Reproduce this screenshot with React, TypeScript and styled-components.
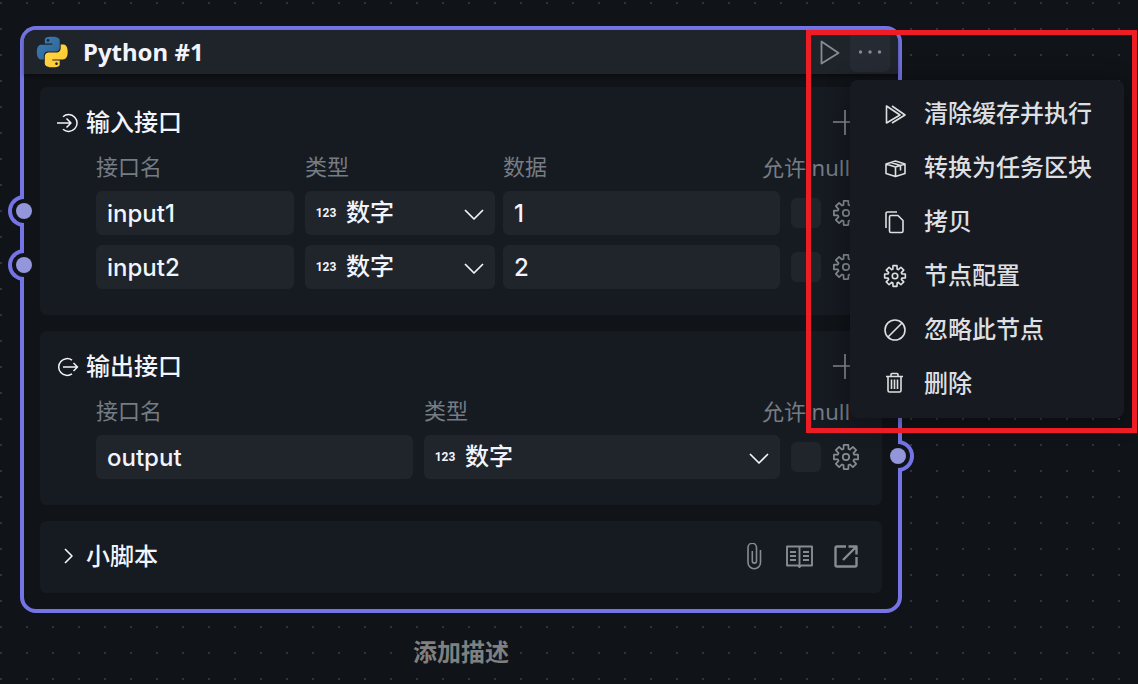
import React from "react";
import styled, { createGlobalStyle } from "styled-components";

const colors = {
  page: "#101317",
  panel: "#161a21",
  field: "#20242b",
  accent: "#7574e6",
  port: "#9396da",
  text: "#f1f4fd",
  muted: "#757c84",
  icon: "#858c94",
  menuText: "#dedfe0",
};

const GlobalStyle = createGlobalStyle`
  *, *::before, *::after { box-sizing: border-box; }
  body {
    margin: 0;
    background-color: ${colors.page};
    color: ${colors.text};
    font-family: Inter, "Noto Sans CJK SC", sans-serif;
    font-size: 24px;
    line-height: 32px;
  }
  button, input, select { font: inherit; color: inherit; }
  svg { display: block; flex: none; }
`;

const Canvas = styled.main`
  min-height: 100vh;
  padding: 26px 236px 16px 20px;
  overflow: hidden;
  background-image: radial-gradient(circle, #30343a 1px, transparent 1px);
  background-size: 26px 26px;
  background-position: -12px -10px;
`;

const Node = styled.article`
  border: 4px solid ${colors.accent};
  border-radius: 16px;
  background: ${colors.page};
`;

const NodeHeader = styled.header`
  display: flex;
  align-items: center;
  height: 44px;
  padding: 0 8px 0 12px;
  border-radius: 12px 12px 0 0;
  background: #1f232a;
  box-shadow: 0 2px 4px rgba(0, 0, 0, 0.4);
`;

const NodeTitle = styled.h1`
  flex: 1;
  margin: 0 0 0 15px;
  font-family: "Noto Sans", sans-serif;
  font-size: 24px;
  font-weight: 700;
`;

const IconButton = styled.button<{ $size: number; $filled?: boolean }>`
  display: flex;
  align-items: center;
  justify-content: center;
  width: ${(p) => p.$size}px;
  height: ${(p) => p.$size}px;
  padding: 0;
  border: 0;
  border-radius: 6px;
  background: ${(p) => (p.$filled ? "#262b33" : "transparent")};
  color: ${colors.icon};
  cursor: pointer;
`;

const MenuAnchor = styled.div`
  position: relative;
  z-index: 2;
`;

const Menu = styled.div`
  position: absolute;
  top: 48px;
  left: 0;
  width: 274px;
  padding: 7px 0;
  border-radius: 8px;
  background: #171b21;
  box-shadow: 0 4px 24px rgba(0, 0, 0, 0.4);
`;

const MenuItem = styled.button`
  display: flex;
  align-items: center;
  gap: 16px;
  width: 100%;
  height: 54px;
  padding: 0 32px;
  border: 0;
  background: transparent;
  color: ${colors.menuText};
  font-weight: 500;
  white-space: nowrap;
  cursor: pointer;
`;

const Highlight = styled.div`
  position: absolute;
  top: -2px;
  left: -44px;
  width: 331px;
  height: 403px;
  border: 5px solid #ee1c24;
  pointer-events: none;
`;

const NodeBody = styled.div`
  display: flex;
  flex-direction: column;
  gap: 16px;
  padding: 13px 16px 16px;
`;

const Panel = styled.section`
  padding: 16px 22px 26px 16px;
  border-radius: 6px;
  background: ${colors.panel};
`;

const ScriptPanel = styled(Panel)`
  padding: 16px 22px 16px 16px;
`;

const PanelHead = styled.div`
  display: flex;
  align-items: center;
  justify-content: space-between;
  height: 40px;
`;

const PanelTitle = styled.h2`
  display: flex;
  align-items: center;
  gap: 6px;
  margin: 0;
  font-size: 24px;
  font-weight: 500;
`;

const Tools = styled.div`
  display: flex;
  gap: 16px;
`;

const Rows = styled.div`
  display: flex;
  flex-direction: column;
  gap: 10px;
  padding-left: 40px;
`;

const Row = styled.div<{ $wide?: boolean }>`
  position: relative;
  display: grid;
  grid-template-columns:
    ${(p) => (p.$wide ? "minmax(0, 317fr) minmax(0, 356fr)" : "minmax(0, 198fr) minmax(0, 475fr)")}
    30px 28px;
  column-gap: 11px;
  align-items: center;
`;

const LabelRow = styled(Row)`
  height: 38px;
  padding-top: 12px;
  padding-bottom: 2px;
  color: ${colors.muted};
  font-size: 22px;
  line-height: 24px;
`;

const NullLabel = styled.span`
  display: flex;
  justify-content: center;
  font-family: "Noto Sans", "Noto Sans CJK SC", sans-serif;
  white-space: nowrap;
`;

const Pair = styled.div`
  display: grid;
  grid-template-columns: minmax(0, 190fr) minmax(0, 277fr);
  column-gap: 8px;
`;

const TextField = styled.input`
  width: 100%;
  height: 44px;
  padding: 0 11px;
  border: 0;
  border-radius: 6px;
  background: ${colors.field};
  font-weight: 500;
  outline: none;
`;

const SelectBox = styled.label`
  display: flex;
  align-items: center;
  height: 44px;
  padding: 0 10px 0 9px;
  border-radius: 6px;
  background: ${colors.field};
`;

const NumberMark = styled.span`
  width: 24px;
  font-family: Roboto, sans-serif;
  font-size: 12px;
  font-weight: 700;
  text-align: center;
`;

const Select = styled.select`
  flex: 1;
  min-width: 0;
  height: 44px;
  padding: 0 0 0 8px;
  border: 0;
  background: transparent;
  appearance: none;
  font-weight: 500;
  outline: none;
`;

const Check = styled.input`
  width: 30px;
  height: 30px;
  margin: 0;
  border-radius: 6px;
  background: ${colors.field};
  appearance: none;
`;

const Port = styled.span<{ $side: "left" | "right" }>`
  position: absolute;
  top: ${(p) => (p.$side === "left" ? 4 : 5)}px;
  ${(p) => (p.$side === "left" ? "left: -88px;" : "right: -54px;")}
  width: 16px;
  height: 32px;
  border: 4px solid ${colors.accent};
  border-${(p) => (p.$side === "left" ? "right" : "left")}: 0;
  border-radius: ${(p) => (p.$side === "left" ? "16px 0 0 16px" : "0 16px 16px 0")};
  background: ${colors.page};

  &::after {
    content: "";
    position: absolute;
    top: 4px;
    ${(p) => (p.$side === "left" ? "right" : "left")}: -8px;
    width: 16px;
    height: 16px;
    border-radius: 50%;
    background: ${colors.port};
  }
`;

const Caption = styled.p`
  margin: 24px 0 0;
  color: #7f8081;
  font-weight: 700;
  text-align: center;
`;

type IconProps = { size: number; box: string; width?: number; children: React.ReactNode };

const Stroke = ({ size, box, width = 1.6, children }: IconProps) => (
  <svg
    width={size}
    height={size}
    viewBox={box}
    fill="none"
    stroke="currentColor"
    strokeWidth={width}
    strokeLinejoin="round"
    aria-hidden="true"
  >
    {children}
  </svg>
);

const PythonLogo = () => (
  <svg width="32" height="32" viewBox="-0.7 -0.5 25 25" aria-hidden="true">
    <defs>
      <linearGradient id="pyBlue" x1="0" y1="0" x2="1" y2="1">
        <stop offset="0" stopColor="#3b7db4" />
        <stop offset="1" stopColor="#2f6492" />
      </linearGradient>
      <linearGradient id="pyYellow" x1="0" y1="0" x2="1" y2="1">
        <stop offset="0" stopColor="#ffd845" />
        <stop offset="1" stopColor="#ffc832" />
      </linearGradient>
    </defs>
    <path
      fill="url(#pyBlue)"
      d="M14.25.18l.9.2.73.26.59.3.45.32.34.34.25.34.16.33.1.3.04.26.02.2-.01.13V8.5l-.05.63-.13.55-.21.46-.26.38-.3.31-.33.25-.35.19-.35.14-.33.1-.3.07-.26.04-.21.02H8.77l-.69.05-.59.14-.5.22-.41.27-.33.32-.27.35-.2.36-.15.37-.1.35-.07.32-.04.27-.02.21v3.06H3.17l-.21-.03-.28-.07-.32-.12-.35-.18-.36-.26-.36-.36-.35-.46-.32-.59-.28-.73-.21-.88-.14-1.05-.05-1.23.06-1.22.16-1.04.24-.87.32-.71.36-.57.4-.44.42-.33.42-.24.4-.16.36-.1.32-.05.24-.01h.16l.06.01h8.16v-.83H6.18l-.01-2.75-.02-.37.05-.34.11-.31.17-.28.25-.26.31-.23.38-.2.44-.18.51-.15.58-.12.64-.1.71-.06.77-.04.84-.02 1.27.05zm-6.3 1.98l-.23.33-.08.41.08.41.23.34.33.22.41.09.41-.09.33-.22.23-.34.08-.41-.08-.41-.23-.33-.33-.22-.41-.09-.41.09z"
    />
    <path
      fill="url(#pyYellow)"
      d="M21.04 6.11l.28.06.32.12.35.18.36.27.36.35.35.47.32.59.28.73.21.88.14 1.04.05 1.23-.06 1.23-.16 1.04-.24.86-.32.71-.36.57-.4.45-.42.33-.42.24-.4.16-.36.09-.32.05-.24.02-.16-.01h-8.22v.82h5.84l.01 2.76.02.36-.05.34-.11.31-.17.29-.25.25-.31.24-.38.2-.44.17-.51.15-.58.13-.64.09-.71.07-.77.04-.84.01-1.27-.04-1.07-.14-.9-.2-.73-.25-.59-.3-.45-.33-.34-.34-.25-.34-.16-.33-.1-.3-.04-.25-.02-.2.01-.13v-5.34l.05-.64.13-.54.21-.46.26-.38.3-.32.33-.24.35-.2.35-.14.33-.1.3-.06.26-.04.21-.02.13-.01h5.84l.69-.05.59-.14.5-.21.41-.28.33-.32.27-.35.2-.36.15-.36.1-.35.07-.32.04-.28.02-.21V6.07h2.09l.14.01zm-6.47 14.25l-.23.33-.08.41.08.41.23.33.33.23.41.08.41-.08.33-.23.23-.33.08-.41-.08-.41-.23-.33-.33-.23-.41-.08-.41.08z"
    />
  </svg>
);

const gearOutline = (() => {
  const points: string[] = [];
  const add = (radius: number, degrees: number) => {
    const a = (degrees * Math.PI) / 180;
    points.push(`${(radius * Math.cos(a)).toFixed(2)} ${(radius * Math.sin(a)).toFixed(2)}`);
  };
  for (let tooth = 0; tooth < 8; tooth++) {
    const mid = tooth * 45;
    add(8.4, mid - 17);
    add(12.3, mid - 11);
    add(12.3, mid + 11);
    add(8.4, mid + 17);
  }
  return `M${points.join("L")}Z`;
})();

const Gear = ({ size }: { size: number }) => (
  <Stroke size={size} box="-14 -14 28 28" width={size < 28 ? 1.9 : 1.7}>
    <path d={gearOutline} />
    <circle r="3.2" />
  </Stroke>
);

const InIcon = () => (
  <Stroke size={24} box="0 0 24 24" width={1.5}>
    <path d="M1 12h14M10.5 7.5L15 12l-4.5 4.5M7 5.8a8.4 8.4 0 1 1 0 12.4" />
  </Stroke>
);

const OutIcon = () => (
  <Stroke size={24} box="0 0 24 24" width={1.5}>
    <path d="M7 12h14.5M17.5 8l4 4-4 4M16 5.2a8.4 8.4 0 1 0 0 13.6" />
  </Stroke>
);

const PlusIcon = () => (
  <Stroke size={26} box="0 0 26 26" width={1.7}>
    <path d="M0 12h25M12 0v25" />
  </Stroke>
);

const ChevronDown = () => (
  <Stroke size={22} box="0 0 22 22" width={1.7}>
    <path d="M2 8l9 9 9-9" />
  </Stroke>
);

const menuItems: { label: string; icon: React.ReactNode }[] = [
  {
    label: "清除缓存并执行",
    icon: (
      <Stroke size={26} box="0 0 26 26">
        <path d="M4.5 5v17L18 14zM10 5l13 9-13 8" />
      </Stroke>
    ),
  },
  {
    label: "转换为任务区块",
    icon: (
      <Stroke size={26} box="0 0 26 26">
        <path d="M4 9l9.5-3L23 9v9.5L13.5 21.5 4 18.5zM4 9l9.5 3L23 9M13.5 12v9.5M9 7.5l9.5 3v5" />
      </Stroke>
    ),
  },
  {
    label: "拷贝",
    icon: (
      <Stroke size={26} box="0 0 26 26">
        <path d="M4 19V4.5a1.5 1.5 0 0 1 1.5-1.5H15M7.5 8a1.5 1.5 0 0 1 1.5-1.5h7l5 5v10.5a1.5 1.5 0 0 1-1.5 1.5H9a1.5 1.5 0 0 1-1.5-1.5z" />
      </Stroke>
    ),
  },
  { label: "节点配置", icon: <Gear size={24} /> },
  {
    label: "忽略此节点",
    icon: (
      <Stroke size={26} box="0 0 26 26">
        <circle cx="13" cy="13" r="10" />
        <path d="M6 20L20 6" />
      </Stroke>
    ),
  },
  {
    label: "删除",
    icon: (
      <Stroke size={26} box="0 0 26 26">
        <path d="M4 5.5h17M9 5.5V3.5a1 1 0 0 1 1-1h5a1 1 0 0 1 1 1v2M6 5.5v14a1.5 1.5 0 0 0 1.5 1.5h10a1.5 1.5 0 0 0 1.5-1.5v-14M9.5 8.5v9.5M12.5 8.5v9.5M15.5 8.5v9.5" />
      </Stroke>
    ),
  },
];

const IconSlot = styled.span`
  display: flex;
  justify-content: center;
  width: 26px;
`;

const TypeSelect = ({ label }: { label: string }) => (
  <SelectBox>
    <NumberMark aria-hidden="true">123</NumberMark>
    <Select aria-label={label} defaultValue="number">
      <option value="number">数字</option>
    </Select>
    <ChevronDown />
  </SelectBox>
);

const RowEnd = ({ name }: { name: string }) => (
  <>
    <Check type="checkbox" aria-label={`${name} null`} />
    <IconButton $size={28} type="button" aria-label={`${name} 配置`}>
      <Gear size={28} />
    </IconButton>
  </>
);

const inputs = [
  { name: "input1", value: "1" },
  { name: "input2", value: "2" },
];

export default function App() {
  return (
    <>
      <GlobalStyle />
      <Canvas>
        <Node>
          <NodeHeader>
            <PythonLogo />
            <NodeTitle>Python #1</NodeTitle>
            <IconButton $size={40} type="button" aria-label="执行">
              <Stroke size={26} box="0 0 26 26" width={1.8}>
                <path d="M4.5 2.5v22L21.5 14z" />
              </Stroke>
            </IconButton>
            <MenuAnchor>
              <IconButton $size={40} $filled type="button" aria-label="更多">
                <svg width="26" height="26" viewBox="0 0 26 26" fill="currentColor" aria-hidden="true">
                  <circle cx="3.5" cy="13" r="1.7" />
                  <circle cx="13" cy="13" r="1.7" />
                  <circle cx="22.5" cy="13" r="1.7" />
                </svg>
              </IconButton>
              <Menu role="menu">
                {menuItems.map((item) => (
                  <MenuItem key={item.label} type="button" role="menuitem">
                    <IconSlot>{item.icon}</IconSlot>
                    {item.label}
                  </MenuItem>
                ))}
              </Menu>
              <Highlight />
            </MenuAnchor>
          </NodeHeader>

          <NodeBody>
            <Panel>
              <PanelHead>
                <PanelTitle>
                  <InIcon />
                  输入接口
                </PanelTitle>
                <IconButton $size={28} type="button" aria-label="添加输入">
                  <PlusIcon />
                </IconButton>
              </PanelHead>
              <Rows>
                <LabelRow>
                  <span>接口名</span>
                  <Pair>
                    <span>类型</span>
                    <span>数据</span>
                  </Pair>
                  <NullLabel>允许 null</NullLabel>
                </LabelRow>
                {inputs.map(({ name, value }) => (
                  <Row key={name}>
                    <Port $side="left" />
                    <TextField aria-label="接口名" defaultValue={name} />
                    <Pair>
                      <TypeSelect label={`${name} 类型`} />
                      <TextField aria-label={`${name} 数据`} defaultValue={value} />
                    </Pair>
                    <RowEnd name={name} />
                  </Row>
                ))}
              </Rows>
            </Panel>

            <Panel>
              <PanelHead>
                <PanelTitle>
                  <OutIcon />
                  输出接口
                </PanelTitle>
                <IconButton $size={28} type="button" aria-label="添加输出">
                  <PlusIcon />
                </IconButton>
              </PanelHead>
              <Rows>
                <LabelRow $wide>
                  <span>接口名</span>
                  <span>类型</span>
                  <NullLabel>允许 null</NullLabel>
                </LabelRow>
                <Row $wide>
                  <Port $side="right" />
                  <TextField aria-label="接口名" defaultValue="output" />
                  <TypeSelect label="output 类型" />
                  <RowEnd name="output" />
                </Row>
              </Rows>
            </Panel>

            <ScriptPanel>
              <PanelHead>
                <PanelTitle>
                  <Stroke size={24} box="0 0 24 24">
                    <path d="M9 4l7 7-7 7" />
                  </Stroke>
                  小脚本
                </PanelTitle>
                <Tools>
                  <IconButton $size={30} type="button" aria-label="附件">
                    <Stroke size={28} box="-1 1 28 28" width={1.6}>
                      <path d="M20.5 8v12.5a6 6 0 0 1-12.5 0V5.5a4.2 4.2 0 0 1 8.5 0V19a2 2 0 0 1-4.2 0V9" />
                    </Stroke>
                  </IconButton>
                  <IconButton $size={30} type="button" aria-label="文档">
                    <Stroke size={28} box="-1 1 28 28" width={1.9}>
                      <path d="M13.5 4.5v20M13.5 4.5H1v19h11l1.5 1.5 1.5-1.5h11v-19zM4 10h6M4 14h6M4 18h6M17 10h6M17 14h6M17 18h6" />
                    </Stroke>
                  </IconButton>
                  <IconButton $size={30} type="button" aria-label="打开">
                    <Stroke size={28} box="-2 1 28 28" width={2.4}>
                      <path d="M13 4.5H4A1.5 1.5 0 0 0 2.5 6v17A1.5 1.5 0 0 0 4 24.5h18a1.5 1.5 0 0 0 1.5-1.5v-8M15.5 4.5h8v8M23.5 4.5L10 18" />
                    </Stroke>
                  </IconButton>
                </Tools>
              </PanelHead>
            </ScriptPanel>
          </NodeBody>
        </Node>
        <Caption>添加描述</Caption>
      </Canvas>
    </>
  );
}
